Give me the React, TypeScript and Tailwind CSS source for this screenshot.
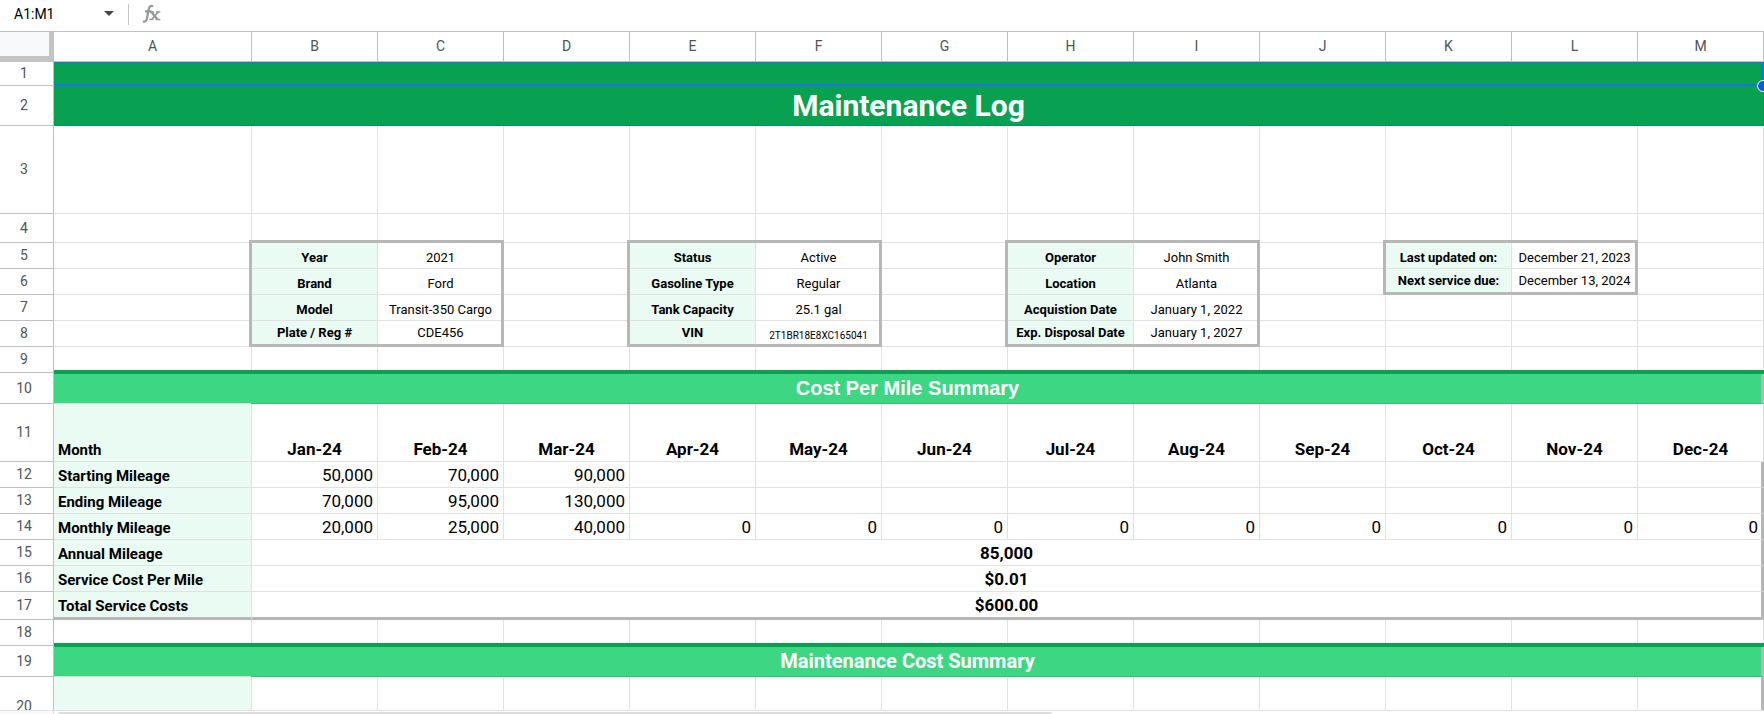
import type { ReactNode } from "react";

const LETTERS = ["A", "B", "C", "D", "E", "F", "G", "H", "I", "J", "K", "L", "M"];
const MONTHS = ["Jan-24", "Feb-24", "Mar-24", "Apr-24", "May-24", "Jun-24", "Jul-24", "Aug-24", "Sep-24", "Oct-24", "Nov-24", "Dec-24"];

const CELL = "relative p-0 border-r border-b border-[#e1e1e1]";
const TINT = "bg-[#eafbf4] border-[#d0ddd8]";

function RowHead({ n, top = false }: { n: number; top?: boolean }) {
  return (
    <th
      scope="row"
      className={`border-r border-b border-[#c0c0c0] bg-white p-0 pr-[5px] text-center text-[14px] leading-4 font-normal text-[#505357] ${top ? "align-top pt-[21px]" : "align-middle pb-px"}`}
    >
      {n}
    </th>
  );
}

function Blank({ count }: { count: number }) {
  return (
    <>
      {Array.from({ length: count }, (_, i) => (
        <td key={i} className={CELL} />
      ))}
    </>
  );
}

type Pair = { label: string; value: string; frame?: "four" | "two"; high?: boolean; small?: boolean };

function PairCells({ label, value, frame, high, small }: Pair) {
  const align = high ? "align-bottom pb-1" : "align-bottom pb-px";
  return (
    <>
      <th scope="row" className={`${CELL} ${TINT} ${align} text-center text-[13px] leading-[18px] font-bold whitespace-nowrap`}>
        {label}
        {frame && (
          <span
            aria-hidden="true"
            className={`pointer-events-none absolute -top-[3px] -left-[3px] z-10 -right-[calc(100%+2px)] border-3 border-[#b7b7b7] ${frame === "four" ? "-bottom-[79px]" : "-bottom-[27px]"}`}
          />
        )}
      </th>
      <td className={`${CELL} text-center whitespace-nowrap ${small ? "align-bottom pb-[3px] text-[10px] leading-[14px]" : `${align} text-[13px] leading-[18px]`}`}>
        {value}
      </td>
    </>
  );
}

/* Each group is one spacer column followed by a label/value pair. */
function InfoGroup({ pair }: { pair: Pair | null }) {
  return (
    <>
      <Blank count={1} />
      {pair ? <PairCells {...pair} /> : <Blank count={2} />}
    </>
  );
}

function InfoRow({ n, pairs }: { n: number; pairs: (Pair | null)[] }) {
  return (
    <tr className="h-[26px]">
      <RowHead n={n} />
      {pairs.map((p, i) => (
        <InfoGroup key={i} pair={p} />
      ))}
      <Blank count={1} />
    </tr>
  );
}

const INFO: (Pair | null)[][] = [
  [
    { label: "Year", value: "2021", frame: "four" },
    { label: "Status", value: "Active", frame: "four" },
    { label: "Operator", value: "John Smith", frame: "four" },
    { label: "Last updated on:", value: "December 21, 2023", frame: "two" },
  ],
  [
    { label: "Brand", value: "Ford" },
    { label: "Gasoline Type", value: "Regular" },
    { label: "Location", value: "Atlanta" },
    { label: "Next service due:", value: "December 13, 2024", high: true },
  ],
  [
    { label: "Model", value: "Transit-350 Cargo" },
    { label: "Tank Capacity", value: "25.1 gal" },
    { label: "Acquistion Date", value: "January 1, 2022" },
    null,
  ],
  [
    { label: "Plate / Reg #", value: "CDE456", high: true },
    { label: "VIN", value: "2T1BR18E8XC165041", high: true, small: true },
    { label: "Exp. Disposal Date", value: "January 1, 2027", high: true },
    null,
  ],
];

const MILEAGE = [
  { n: 12, label: "Starting Mileage", values: ["50,000", "70,000", "90,000", "", "", "", "", "", "", "", "", ""] },
  { n: 13, label: "Ending Mileage", values: ["70,000", "95,000", "130,000", "", "", "", "", "", "", "", "", ""] },
  { n: 14, label: "Monthly Mileage", values: ["20,000", "25,000", "40,000", "0", "0", "0", "0", "0", "0", "0", "0", "0"] },
];

const TOTALS = [
  { n: 15, label: "Annual Mileage", value: "85,000" },
  { n: 16, label: "Service Cost Per Mile", value: "$0.01" },
  { n: 17, label: "Total Service Costs", value: "$600.00" },
];

function SideLabel({ children, extra = "" }: { children?: ReactNode; extra?: string }) {
  return (
    <th scope="row" className={`${CELL} ${TINT} pb-[2px] pl-1 text-left align-bottom text-[15px] leading-[18px] font-bold whitespace-nowrap ${extra}`}>
      {children}
    </th>
  );
}

function Banner({ n, title, font = "" }: { n: number; title: string; font?: string }) {
  return (
    <tr className="h-[31px]">
      <RowHead n={n} />
      <td
        colSpan={13}
        className="relative border-r-3 border-b border-r-[#b7b7b7] border-b-[#37bf75] bg-[#3dd784] p-0 text-center align-middle text-white"
      >
        <span aria-hidden="true" className="absolute -top-[3px] -right-[3px] left-0 h-1 bg-[#08a152]" />
        <h2 className={`text-[20px] leading-6 font-bold ${font}`}>{title}</h2>
      </td>
    </tr>
  );
}

const A_TOP_LINE = "before:absolute before:-top-px before:inset-x-0 before:h-px before:bg-[#d0ddd8]";

export default function App() {
  return (
    <div className="flex h-screen flex-col overflow-hidden bg-white font-['Roboto',sans-serif] text-black">
      <header className="flex h-8 shrink-0 items-start border-b border-[#c0c0c0]">
        <input aria-label="Name box" className="h-[27px] w-20 shrink-0 pl-[14px] text-[14px] outline-none" defaultValue="A1:M1" />
        <button type="button" aria-label="Named ranges" className="flex h-[27px] w-12 shrink-0 items-center justify-center pl-[9px]">
          <svg width="10" height="5" viewBox="0 0 10 5" fill="#444746"><path d="M0 0h10L5 5z" /></svg>
        </button>
        <div className="mt-1 h-[21px] border-l border-[#c7c7c7]" />
        <svg className="mt-1 ml-[13px]" width="20" height="20" viewBox="0 0 20 20" fill="none" stroke="#969899">
          <path d="M1 17.200c1.800.9 3.200.2 3.800-2.300L6.800 5C7.400 2.300 9 1.200 11.200 2.200M3 7.400h6.500" strokeWidth="2.200" />
          <path d="M9.500 8.100l5.800 7.500" strokeWidth="2.400" />
          <path d="M8 8.100h4M14 8.100h4.300M7.400 15.600h4M13.800 15.600h4.600M16.200 8.100l-6.600 7.500" strokeWidth="1.500" />
        </svg>
        <input aria-label="Formula" className="h-[27px] min-w-0 flex-1 pl-2 text-[14px] outline-none" />
      </header>

      <main className="min-h-0 flex-1 overflow-hidden">
        <table className="w-full table-fixed border-separate border-spacing-0">
          <colgroup>
            <col className="w-[54px]" />
            <col className="w-[198px]" />
            {MONTHS.map((m) => (
              <col key={m} />
            ))}
          </colgroup>
          <thead>
            <tr className="h-[30px]">
              <td className="border-r-[5px] border-b-[6px] border-[#c4c4c4] bg-[#f8f9fa] p-0" />
              {LETTERS.map((l) => (
                <th key={l} scope="col" className="border-r border-b border-[#c0c0c0] p-0 pb-px text-center align-middle text-[14px] leading-4 font-normal text-[#505357]">
                  {l}
                </th>
              ))}
            </tr>
          </thead>
          <tbody>
            <tr className="h-6">
              <RowHead n={1} />
              <td colSpan={13} className="relative bg-[#08a152] p-0">
                <span aria-hidden="true" className="absolute top-0 right-px bottom-0 left-0 border-t border-r-2 border-b-2 border-[#1a73e8]" />
                <span aria-hidden="true" className="absolute -right-[5px] -bottom-[6px] z-10 size-3 rounded-full border border-white bg-[#1558d6]" />
              </td>
            </tr>
            <tr className="h-10">
              <RowHead n={2} />
              <td colSpan={13} className="border-r border-b border-[#0b914c] bg-[#08a152] p-0 text-center align-middle text-white">
                <h1 className="text-[30px] leading-9 font-bold">Maintenance Log</h1>
              </td>
            </tr>
            <tr className="h-[88px]">
              <RowHead n={3} />
              <Blank count={13} />
            </tr>
            <tr className="h-[29px]">
              <RowHead n={4} />
              <Blank count={13} />
            </tr>
            {INFO.map((pairs, i) => (
              <InfoRow key={i} n={i + 5} pairs={pairs} />
            ))}
            <tr className="h-[26px]">
              <RowHead n={9} />
              <Blank count={13} />
            </tr>
            <Banner n={10} title="Cost Per Mile Summary" font="font-['Liberation_Sans',sans-serif]" />
            <tr className="h-[58px]">
              <RowHead n={11} />
              <SideLabel extra={A_TOP_LINE}>Month</SideLabel>
              {MONTHS.map((m) => (
                <th key={m} scope="col" className={`${CELL} pb-[2px] text-center align-bottom text-[17px] leading-5 font-bold`}>
                  {m}
                </th>
              ))}
            </tr>
            {MILEAGE.map((r) => (
              <tr key={r.n} className="h-[26px]">
                <RowHead n={r.n} />
                <SideLabel>{r.label}</SideLabel>
                {r.values.map((v, i) => (
                  <td key={i} className={`${CELL} pb-[2px] text-right align-bottom text-[17px] leading-5 ${i === 11 ? "border-r-3 border-r-[#b7b7b7] pr-[3px]" : "pr-1"}`}>
                    {v}
                  </td>
                ))}
              </tr>
            ))}
            {TOTALS.map((r) => {
              const last = r.n === 17;
              const edge = last ? "border-b-3 border-b-[#b7b7b7]" : "";
              return (
                <tr key={r.n} className={last ? "h-7" : "h-[26px]"}>
                  <RowHead n={r.n} />
                  <SideLabel extra={edge}>{r.label}</SideLabel>
                  <td colSpan={12} className={`${CELL} border-r-3 border-r-[#b7b7b7] pb-[2px] text-center align-bottom text-[17px] leading-5 font-bold ${edge}`}>
                    {r.value}
                  </td>
                </tr>
              );
            })}
            <tr className="h-[26px]">
              <RowHead n={18} />
              <Blank count={13} />
            </tr>
            <Banner n={19} title="Maintenance Cost Summary" />
            <tr className="h-[58px]">
              <RowHead n={20} top />
              <SideLabel extra={A_TOP_LINE} />
              <Blank count={11} />
              <td className={`${CELL} border-r-3 border-r-[#b7b7b7]`} />
            </tr>
          </tbody>
        </table>
      </main>

      <footer className="flex h-1 shrink-0 overflow-hidden border-t border-[#e1e1e1]">
        <div className="w-[54px] shrink-0 border-r border-[#d9d9d9] bg-[#f8f9fa]" />
        <div className="flex-1 overflow-hidden pt-px pl-[3px]">
          <div className="h-2 w-7/12 rounded-full bg-[#dadce0]" />
        </div>
      </footer>
    </div>
  );
}
